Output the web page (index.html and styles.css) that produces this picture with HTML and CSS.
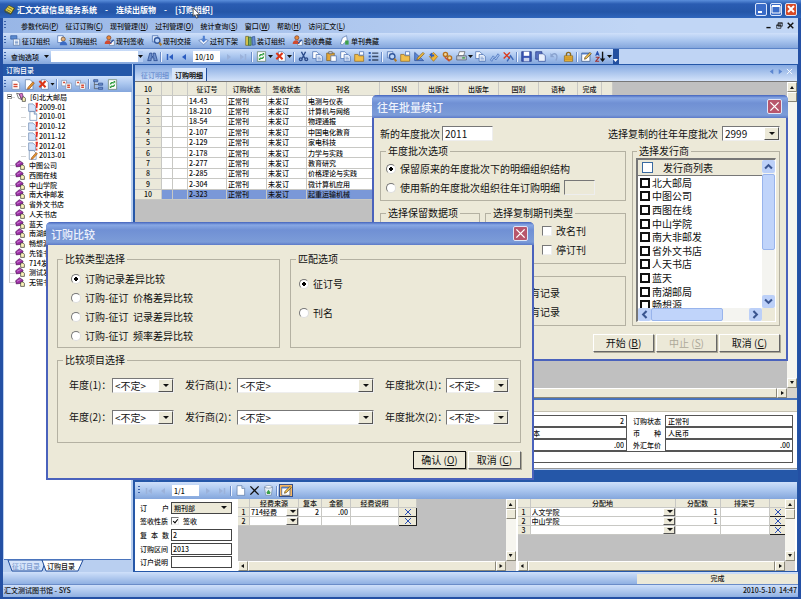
FILE: index.html
```html
<!DOCTYPE html>
<html>
<head>
    <meta charset="utf-8">
    <title>汇文文献信息服务系统</title>
    <link rel="stylesheet" href="styles.css">
</head>
<body>
    <svg class="defs" width="0" height="0">
        <symbol id="i-book" viewBox="0 0 16 16"><path d="M1 9 7 2l8 4-5 8z" fill="#e8d44c" stroke="#4a4a10"/><path d="M1 9l1 3 8 3 5-8-1-2M4 8l6 3M6 5l6 3" fill="none" stroke="#4a4a10"/></symbol>
        <symbol id="i-page" viewBox="0 0 16 16"><path d="M3 1h7l4 4v10H3z" fill="#fff" stroke="#5c7ba8"/><path d="M10 1v4h4" fill="#c6d8f2" stroke="#5c7ba8"/></symbol>
        <symbol id="i-pages" viewBox="0 0 16 16"><path d="M1 1h6l3 3v7H1z" fill="#fff" stroke="#3f66ac"/><path d="M6 5h6l3 3v7H6z" fill="#e8f0fc" stroke="#3f66ac"/><path d="M8 9h4M8 11h5M8 13h5" stroke="#6f90c8"/></symbol>
        <symbol id="i-org" viewBox="0 0 16 16"><path d="M1 1h9v5H1z" fill="#5b8ad0" stroke="#2d579f"/><path d="M5 6h9v9H5z" fill="#fff" stroke="#5c7ba8"/><path d="M7 9h5M7 11h5M7 13h5" stroke="#4a74b8"/></symbol>
        <symbol id="i-man" viewBox="0 0 16 16"><path d="M1 1h8v10H1z" fill="#fff" stroke="#3f66ac"/><circle cx="9" cy="6" r="3" fill="#e6b27a" stroke="#5a4630"/><path d="M4 15c0-8 10-8 11 0z" fill="#3c6cc4"/></symbol>
        <symbol id="i-manred" viewBox="0 0 16 16"><path d="M8 8h7v7H8z" fill="#fff" stroke="#5c7ba8"/><circle cx="7" cy="4" r="3" fill="#e88a3a" stroke="#7a3a20"/><path d="M1 13c0-7 9-7 10 0z" fill="#d04a30"/><path d="m9 12 5-5" stroke="#3055a0" stroke-width="2"/></symbol>
        <symbol id="i-search" viewBox="0 0 16 16"><path d="M2 1h8v9H2z" fill="#dfeafb" stroke="#3f66ac"/><circle cx="9" cy="8" r="4" fill="#bcd6fa" stroke="#33589c" stroke-width="2"/><path d="m12 11 3 4" stroke="#b07a28" stroke-width="3"/></symbol>
        <symbol id="i-shelf" viewBox="0 0 16 16"><path d="m1 8 7-3 7 3-7 6z" fill="#eef4fd" stroke="#5272ac"/><path d="M7 1h3v5h3L8 11 4 6h3z" fill="#4d7ed0"/></symbol>
        <symbol id="i-books" viewBox="0 0 16 16"><path d="M1 2h4v13H1z" fill="#e0cc50" stroke="#6b6020"/><path d="M5 3h4v12H5z" fill="#76ad62" stroke="#35602a"/><path d="m10 3 4-1 1 12-4 1z" fill="#668fd4" stroke="#2f4f8f"/></symbol>
        <symbol id="i-single" viewBox="0 0 16 16"><path d="m2 13 3-9 6-3 1 7-7 6z" fill="#fff" stroke="#4f6fa8"/><path d="M9 8h5v6H9z" fill="#3fa04a"/></symbol>
        <symbol id="i-bino" viewBox="0 0 16 16"><path d="m1 14 3-11h3v5h2V3h3l3 11h-5v-4H6v4z" fill="#6e90cc" stroke="#1d3f86"/></symbol>
        <symbol id="i-first" viewBox="0 0 16 16"><path d="M3 2v12" stroke="currentColor" stroke-width="3"/><path d="M14 2v12L6 8z" fill="currentColor"/></symbol>
        <symbol id="i-prev" viewBox="0 0 16 16"><path d="M12 2v12L4 8z" fill="currentColor"/></symbol>
        <symbol id="i-next" viewBox="0 0 16 16"><path d="M4 2v12l8-6z" fill="currentColor"/></symbol>
        <symbol id="i-last" viewBox="0 0 16 16"><path d="M13 2v12" stroke="currentColor" stroke-width="3"/><path d="M2 2v12l8-6z" fill="currentColor"/></symbol>
        <symbol id="i-refresh" viewBox="0 0 16 16"><path d="M2 1h12v14H2z" fill="#fff" stroke="#5d7a5d"/><path d="M5 8a3 3 0 0 1 5-2M11 8a3 3 0 0 1-5 2" fill="none" stroke="#2b9a3a" stroke-width="2"/><path d="M9 3h3v4zM7 13H4V9z" fill="#2b9a3a"/></symbol>
        <symbol id="i-bin" viewBox="0 0 16 16"><path d="M2 3h12l-2 12H4z" fill="#e8eef6" stroke="#7088a8"/><path d="M2 3c3-3 9-3 12 0-3 2-9 2-12 0z" fill="#fff" stroke="#7088a8"/><path d="M5 11l3-4 3 4-1 2H6z" fill="#3aa048"/></symbol>
        <symbol id="i-del" viewBox="0 0 16 16"><path d="M5 1h6l4 4v10H5z" fill="#fff" stroke="#5c7ba8"/><path d="m2 3 9 9M11 3l-9 9" stroke="#dc3618" stroke-width="3"/></symbol>
        <symbol id="i-cut" viewBox="0 0 16 16"><path d="m5 1 5 10M11 1 6 11" stroke="#2a4a8a" stroke-width="2"/><circle cx="4" cy="12" r="2" fill="none" stroke="#2a4a8a" stroke-width="2"/><circle cx="12" cy="12" r="2" fill="none" stroke="#2a4a8a" stroke-width="2"/></symbol>
        <symbol id="i-paste" viewBox="0 0 16 16"><path d="M1 3h11v11H1z" fill="#e3a637" stroke="#7c5a1c"/><path d="M4 1h5v3H4z" fill="#d5dbe8" stroke="#555"/><path d="M7 7h8v8H7z" fill="#fff" stroke="#3f66ac"/></symbol>
        <symbol id="i-folder" viewBox="0 0 16 16"><path d="M1 5h5l1 2h7v8H1z" fill="#f0be4a" stroke="#94691c"/><path d="M8 1h6v5H8z" fill="#fff" stroke="#3f66ac"/></symbol>
        <symbol id="i-list" viewBox="0 0 16 16"><path d="M1 3h3M1 8h3M1 13h3" stroke="#2f5fb4" stroke-width="3"/><path d="M6 3h9M6 8h9M6 13h9" stroke="#3a4a66" stroke-width="2"/></symbol>
        <symbol id="i-ruler" viewBox="0 0 16 16"><path d="M1 2v12h13z" fill="#5c88d8" stroke="#2a4c94"/><path d="m5 10 8-8 2 2-8 8-3 1z" fill="#f0b83c" stroke="#805c18"/></symbol>
        <symbol id="i-tag" viewBox="0 0 16 16"><path d="m8 2 6 6-6 7-6-7z" fill="#f3b52f" stroke="#a06a10"/><path d="m2 5 4-3v3h3v3H6v3z" fill="#2d5cc0"/></symbol>
        <symbol id="i-gear" viewBox="0 0 16 16"><circle cx="5" cy="5" r="3" fill="#f2d9a0" stroke="#b5701c" stroke-width="2"/><circle cx="11" cy="10" r="3" fill="#f2d9a0" stroke="#b5701c" stroke-width="2"/><path d="m4 9 7 6" stroke="#c64a30" stroke-width="2"/></symbol>
        <symbol id="i-print" viewBox="0 0 16 16"><path d="M5 1h8l-2 6H3z" fill="#fff" stroke="#555"/><path d="M1 7h14v6H1z" fill="#c3c9d4" stroke="#4d5668"/><path d="M9 9h4v2H9z" fill="#3ca044"/></symbol>
        <symbol id="i-link" viewBox="0 0 16 16"><path d="m2 13 4-6 3 3 4-6 2 2-5 7-3-3-3 5z" fill="#a8c4ee" stroke="#3d68b8"/></symbol>
        <symbol id="i-unlink" viewBox="0 0 16 16"><path d="m6 15 5-8 4 6" fill="none" stroke="#3d68b8" stroke-width="2"/><path d="m1 2 9 9M10 2l-9 9" stroke="#dc3618" stroke-width="2"/></symbol>
        <symbol id="i-save" viewBox="0 0 16 16"><path d="M1 1h14v14H1z" fill="#3a55b4" stroke="#1f3580"/><path d="M4 1h8v6H4z" fill="#fff"/><path d="M4 10h8v5H4z" fill="#c9d3ee"/></symbol>
        <symbol id="i-saveall" viewBox="0 0 16 16"><path d="M1 1h9v11H1z" fill="#5a72c4" stroke="#1f3580"/><path d="M5 4h7l3 3v8H5z" fill="#e8effc" stroke="#2d4796"/></symbol>
        <symbol id="i-undo" viewBox="0 0 16 16"><path d="M4 6c5-5 10 0 6 8" fill="none" stroke="#8aa3cf" stroke-width="2"/><path d="M2 3v6h6z" fill="#8aa3cf"/></symbol>
        <symbol id="i-lock" viewBox="0 0 16 16"><path d="M5 8V5a3 3 0 0 1 6 0v3" fill="none" stroke="#8a6a20" stroke-width="2"/><path d="M2 7h12v8H2z" fill="#f0b838" stroke="#8a6418"/><path d="M3 10h10M3 12h10" stroke="#b37e1c"/></symbol>
        <symbol id="i-edit" viewBox="0 0 16 16"><path d="M1 3h12v12H1z" fill="#fff" stroke="#33507f"/><path d="M1 3h12v2H1z" fill="#4a76c0"/><path d="m5 12 1-3 7-7 2 2-7 7z" fill="#f0c050" stroke="#5c4418"/></symbol>
        <symbol id="i-sort" viewBox="0 0 16 16"><path d="m1 7 2.500-6L6 7M2 5h3" fill="none" stroke="#2850b0" stroke-width="1.500"/><path d="M1 9h5l-5 6h5" fill="none" stroke="#a03030" stroke-width="1.500"/><path d="M11 1v12" stroke="#111" stroke-width="2"/><path d="M7 11h8l-4 5z" fill="#111"/></symbol>
        <symbol id="i-newred" viewBox="0 0 16 16"><path d="M3 2h7l4 4v9H3z" fill="#fff" stroke="#7c8fae"/><path d="M5 8h6M5 11h6" stroke="#d64a34" stroke-width="2"/></symbol>
        <symbol id="i-docpen" viewBox="0 0 16 16"><path d="M2 1h7l4 4v10H2z" fill="#fff" stroke="#5c7ba8"/><path d="m6 12 7-8 2 2-7 8-3 1z" fill="#e59a2f" stroke="#9a4a18"/></symbol>
        <symbol id="i-copyred" viewBox="0 0 16 16"><path d="M1 2h7v8H1z" fill="#fff" stroke="#7c8fae"/><path d="M7 6h8v9H7z" fill="#fff" stroke="#7c8fae"/><path d="M3 5h3M9 9h4M9 12h4" stroke="#d64a34" stroke-width="2"/></symbol>
        <symbol id="i-tree" viewBox="0 0 16 16"><path d="M2 1v13h6M2 8h6" fill="none" stroke="#555"/><path d="M1 1h6v3H1zM8 6h6v3H8zM8 12h6v3H8z" fill="#6a8fd0" stroke="#2b4a8a"/></symbol>
        <symbol id="i-docmark" viewBox="0 0 16 16"><path d="M1 3h7l4 4v8H1z" fill="#d4e2f8" stroke="#5c7ba8"/><path d="M12 1h4l-1 9h-2zM13 12h2v3h-2z" fill="#e02a20"/></symbol>
        <symbol id="i-vendor" viewBox="0 0 16 16"><path d="M1 6 7 1l6 4-2 5-9 1z" fill="#9b2fa4" stroke="#4a1450"/><path d="M3 7l6-3" stroke="#e6a8ea"/><path d="M9 8h4l2 2v5H9z" fill="#fbf3b8" stroke="#222"/></symbol>
        <symbol id="i-open" viewBox="0 0 16 16"><path d="M1 2l4 1 4 9-5-2z" fill="#fff" stroke="#333"/><path d="m5 3 5-1 2 7-3 3z" fill="#d878c8" stroke="#4a1450"/><path d="M10 8h3l2 2v5h-5z" fill="#fbf3b8" stroke="#222"/></symbol>
        <symbol id="i-x" viewBox="0 0 16 16"><path d="m2 2 12 12M14 2 2 14" stroke="currentColor" stroke-width="2"/></symbol>
        <symbol id="i-down" viewBox="0 0 16 16"><path d="m3 5 5 5 5-5" fill="none" stroke="currentColor" stroke-width="3"/></symbol>
    </svg>

    <div class="app">
        <header class="titlebar">
            <svg class="icon"><use href="#i-book"/></svg>
            <h1>汇文文献信息服务系统<span>-</span>连续出版物<span>-</span>[订购组织]</h1>
            <svg class="cursor" viewBox="0 0 10 14"><path d="M1 1v10l2-2 2 4 2-1-2-3h4z" fill="#fff" stroke="#333"/></svg>
            <div class="win-buttons">
                <button class="win"><svg viewBox="0 0 10 10"><path d="M2 8h4" stroke="#fff" stroke-width="2"/></svg></button>
                <button class="win"><svg viewBox="0 0 10 10"><path d="M1 2h8v7H1z" fill="none" stroke="#fff"/><path d="M1 2h8" stroke="#fff" stroke-width="2"/></svg></button>
                <button class="win close"><svg viewBox="0 0 10 10"><path d="m2 2 6 6M8 2 2 8" stroke="#fff" stroke-width="2"/></svg></button>
            </div>
        </header>

        <nav class="menubar">
            <span class="grip"></span>
            <a href="#">参数代码(<u>P</u>)</a>
            <a href="#">征订订购(<u>C</u>)</a>
            <a href="#">现刊管理(<u>N</u>)</a>
            <a href="#">过刊管理(<u>O</u>)</a>
            <a href="#">统计查询(<u>S</u>)</a>
            <a href="#">窗口(<u>W</u>)</a>
            <a href="#">帮助(<u>H</u>)</a>
            <a href="#">访问汇文(<u>L</u>)</a>
            <div class="mdi">
                <svg viewBox="0 0 10 10"><path d="M2 8h6" stroke="#111" stroke-width="2"/></svg>
                <svg viewBox="0 0 10 10"><path d="M3 1h6v5H3zM1 4h6v5H1z" fill="none" stroke="#111" stroke-width="1"/><path d="M3 2h6M1 5h6" stroke="#111"/></svg>
                <svg viewBox="0 0 10 10"><path d="m1 1 8 8M9 1 1 9" stroke="#111" stroke-width="2"/></svg>
            </div>
        </nav>

        <div class="bar modules">
            <span class="grip"></span>
            <button><svg class="icon"><use href="#i-org"/></svg>征订组织</button>
            <button><svg class="icon"><use href="#i-man"/></svg>订购组织</button>
            <button><svg class="icon"><use href="#i-manred"/></svg>现刊签收</button>
            <button><svg class="icon"><use href="#i-search"/></svg>现刊交接</button>
            <button><svg class="icon"><use href="#i-shelf"/></svg>过刊下架</button>
            <button><svg class="icon"><use href="#i-books"/></svg>装订组织</button>
            <button><svg class="icon"><use href="#i-manred"/></svg>验收典藏</button>
            <button><svg class="icon"><use href="#i-single"/></svg>单刊典藏</button>
        </div>

        <div class="tools-row">
            <div class="bar tools">
                <span class="grip"></span>
                <button class="query">查询选项<i class="tri"></i></button>
                <span class="search"><input type="text" aria-label="查询"><i class="tri"></i></span>
                <button class="tool"><svg class="icon"><use href="#i-bino"/></svg></button>
                <i class="sep"></i>
                <button class="tool nav"><svg class="icon"><use href="#i-first"/></svg></button>
                <button class="tool nav"><svg class="icon"><use href="#i-prev"/></svg></button>
                <input class="pager" type="text" value="10/10" aria-label="记录">
                <button class="tool nav off"><svg class="icon"><use href="#i-next"/></svg></button>
                <button class="tool nav off"><svg class="icon"><use href="#i-last"/></svg></button>
                <i class="sep"></i>
                <button class="tool"><svg class="icon"><use href="#i-refresh"/></svg></button><i class="tri"></i>
                <button class="tool"><svg class="icon"><use href="#i-del"/></svg></button><i class="tri"></i>
                <i class="sep"></i>
                <button class="tool"><svg class="icon"><use href="#i-cut"/></svg></button>
                <button class="tool"><svg class="icon"><use href="#i-pages"/></svg></button>
                <button class="tool"><svg class="icon"><use href="#i-paste"/></svg></button>
                <button class="tool"><svg class="icon"><use href="#i-pages"/></svg></button>
                <button class="tool"><svg class="icon"><use href="#i-folder"/></svg></button>
                <button class="tool"><svg class="icon"><use href="#i-list"/></svg></button>
                <i class="sep"></i>
                <button class="tool"><svg class="icon"><use href="#i-search"/></svg></button>
                <button class="tool"><svg class="icon"><use href="#i-folder"/></svg></button>
                <button class="tool"><svg class="icon"><use href="#i-ruler"/></svg></button>
                <button class="tool"><svg class="icon"><use href="#i-tag"/></svg></button>
                <button class="tool"><svg class="icon"><use href="#i-gear"/></svg></button>
                <button class="tool"><svg class="icon"><use href="#i-print"/></svg></button><i class="tri"></i>
                <button class="tool"><svg class="icon"><use href="#i-pages"/></svg></button>
                <button class="tool"><svg class="icon"><use href="#i-link"/></svg></button>
                <button class="tool"><svg class="icon"><use href="#i-unlink"/></svg></button>
                <i class="sep"></i>
                <button class="tool"><svg class="icon"><use href="#i-save"/></svg></button>
                <button class="tool"><svg class="icon"><use href="#i-saveall"/></svg></button>
                <button class="tool"><svg class="icon"><use href="#i-undo"/></svg></button>
                <button class="tool"><svg class="icon"><use href="#i-lock"/></svg></button>
                <i class="sep"></i>
                <button class="tool"><svg class="icon"><use href="#i-edit"/></svg></button>
                <button class="tool"><svg class="icon"><use href="#i-sort"/></svg></button><i class="tri"></i>
                <span class="overflow"><i class="tri"></i></span>
            </div>
        </div>

        <div class="workspace">
            <aside class="sidebar">
                <h2>订购目录</h2>
                <div class="bar side-tools">
                    <span class="grip"></span>
                    <button class="tool"><svg class="icon"><use href="#i-newred"/></svg></button>
                    <button class="tool"><svg class="icon"><use href="#i-docpen"/></svg></button>
                    <button class="tool"><svg class="icon"><use href="#i-del"/></svg></button><i class="tri"></i>
                    <i class="sep"></i>
                    <button class="tool"><svg class="icon"><use href="#i-copyred"/></svg></button>
                    <button class="tool"><svg class="icon"><use href="#i-copyred"/></svg></button>
                    <i class="sep"></i>
                    <button class="tool"><svg class="icon"><use href="#i-tree"/></svg></button>
                    <button class="tool"><svg class="icon"><use href="#i-refresh"/></svg></button>
                </div>
                <div class="tree-box">
                    <ul class="tree">
                        <li class="root"><i class="minus"></i><svg class="icon"><use href="#i-open"/></svg>[6]北大邮局</li>
                        <li class="child"><svg class="icon"><use href="#i-docmark"/></svg>2009-01</li>
                        <li class="child"><svg class="icon"><use href="#i-page"/></svg>2010-01</li>
                        <li class="child"><svg class="icon"><use href="#i-docmark"/></svg>2010-12</li>
                        <li class="child"><svg class="icon"><use href="#i-docmark"/></svg>2011-12</li>
                        <li class="child"><svg class="icon"><use href="#i-docmark"/></svg>2012-01</li>
                        <li class="child"><svg class="icon"><use href="#i-docpen"/></svg>2013-01</li>
                        <li><svg class="icon"><use href="#i-vendor"/></svg>中图公司</li>
                        <li><svg class="icon"><use href="#i-vendor"/></svg>西图在线</li>
                        <li><svg class="icon"><use href="#i-vendor"/></svg>中山学院</li>
                        <li><svg class="icon"><use href="#i-vendor"/></svg>南大非邮发</li>
                        <li><svg class="icon"><use href="#i-vendor"/></svg>省外文书店</li>
                        <li><svg class="icon"><use href="#i-vendor"/></svg>人天书店</li>
                        <li><svg class="icon"><use href="#i-vendor"/></svg>蓝天</li>
                        <li><svg class="icon"><use href="#i-vendor"/></svg>南湖邮局</li>
                        <li><svg class="icon"><use href="#i-vendor"/></svg>畅想源</li>
                        <li><svg class="icon"><use href="#i-vendor"/></svg>先锋书店</li>
                        <li><svg class="icon"><use href="#i-vendor"/></svg>714发行</li>
                        <li><svg class="icon"><use href="#i-vendor"/></svg>测试发行</li>
                        <li><svg class="icon"><use href="#i-vendor"/></svg>无锡书店</li>
                    </ul>
                </div>
                <div class="side-tabs">
                    <svg viewBox="0 0 84 12"><path d="M5 0l4 11h30l4-11z" fill="#d6e4fa" stroke="#1e4c9c"/><path d="M39 0l4 11h32l5-11z" fill="#fff" stroke="#1e4c9c"/></svg>
                    <button>征订目录</button>
                    <button class="active">订购目录</button>
                </div>
            </aside>

            <main class="main">
                <div class="tabs">
                    <button>征订明细</button>
                    <button class="active">订购明细</button>
                    <div class="tab-nav">
                        <svg class="icon"><use href="#i-prev"/></svg>
                        <svg class="icon"><use href="#i-next"/></svg>
                        <svg class="icon x"><use href="#i-x"/></svg>
                    </div>
                </div>

                <div class="pane">
                    <div class="pane-body">
                        <table class="grid orders">
                            <colgroup><col class="w27"><col class="w11"><col class="w15"><col class="w39"><col class="w40"><col class="w40"><col class="w73"><col class="w39"><col class="w40"><col class="w40"><col class="w40"><col class="w39"><col class="w24"><col class="w11"></colgroup>
                            <thead>
                                <tr><th>10</th><th></th><th></th><th>征订号</th><th>订购状态</th><th>签收状态</th><th>刊名</th><th>ISSN</th><th>出版社</th><th>出版年</th><th>国别</th><th>语种</th><th>完成</th><th></th></tr>
                            </thead>
                            <tbody>
                                <tr><th>1</th><td></td><td></td><td>14-43</td><td>正常刊</td><td>未发订</td><td>电测与仪表</td><td></td><td></td><td></td><td></td><td></td><td></td><td></td></tr>
                                <tr><th>2</th><td></td><td></td><td>18-210</td><td>正常刊</td><td>未发订</td><td>计算机与网络</td><td></td><td></td><td></td><td></td><td></td><td></td><td></td></tr>
                                <tr><th>3</th><td></td><td></td><td>18-54</td><td>正常刊</td><td>未发订</td><td>物理通报</td><td></td><td></td><td></td><td></td><td></td><td></td><td></td></tr>
                                <tr><th>4</th><td></td><td></td><td>2-107</td><td>正常刊</td><td>未发订</td><td>中国电化教育</td><td></td><td></td><td></td><td></td><td></td><td></td><td></td></tr>
                                <tr><th>5</th><td></td><td></td><td>2-129</td><td>正常刊</td><td>未发订</td><td>家电科技</td><td></td><td></td><td></td><td></td><td></td><td></td><td></td></tr>
                                <tr><th>6</th><td></td><td></td><td>2-178</td><td>正常刊</td><td>未发订</td><td>力学与实践</td><td></td><td></td><td></td><td></td><td></td><td></td><td></td></tr>
                                <tr><th>7</th><td></td><td></td><td>2-277</td><td>正常刊</td><td>未发订</td><td>教育研究</td><td></td><td></td><td></td><td></td><td></td><td></td><td></td></tr>
                                <tr><th>8</th><td></td><td></td><td>2-285</td><td>正常刊</td><td>未发订</td><td>价格理论与实践</td><td></td><td></td><td></td><td></td><td></td><td></td><td></td></tr>
                                <tr><th>9</th><td></td><td></td><td>2-304</td><td>正常刊</td><td>未发订</td><td>微计算机应用</td><td></td><td></td><td></td><td></td><td></td><td></td><td></td></tr>
                                <tr class="selected"><th>10</th><td></td><td></td><td>2-323</td><td>正常刊</td><td>未发订</td><td>起重运输机械</td><td></td><td></td><td></td><td></td><td></td><td></td><td></td></tr>
                            </tbody>
                        </table>
                    </div>
                    <div class="vbar"><i class="up"></i><b></b><i class="down"></i></div>
                    <div class="hbar"><i class="left"></i><b></b><i class="right"></i></div>
                </div>

                <div class="divider"></div>

                <form class="detail">
                    <label for="year">年度</label><input id="year" type="text" value="2013">
                    <label for="copies">复本数</label><input id="copies" class="num" type="text" value="2">
                    <label for="state">订购状态</label><input id="state" type="text" value="正常刊">
                    <label for="batch">批次</label><input id="batch" type="text" value="01">
                    <label for="edition">版本</label><input id="edition" type="text" value="印刷版本">
                    <label for="currency" class="spread"><span>币</span><span>种</span></label><input id="currency" type="text" value="人民币">
                    <label for="unit">单价</label><input id="unit" type="text">
                    <label for="price">年价</label><input id="price" class="num" type="text" value=".00">
                    <label for="foreign">外汇年价</label><input id="foreign" class="num" type="text" value=".00">
                    <label for="note">备注</label><input id="note" class="wide" type="text">
                </form>

                <h2 class="section-title">订户信息</h2>
                <div class="bar sub-tools">
                    <span class="grip"></span>
                    <button class="tool nav off"><svg class="icon"><use href="#i-first"/></svg></button>
                    <button class="tool nav off"><svg class="icon"><use href="#i-prev"/></svg></button>
                    <input class="pager" type="text" value="1/1" aria-label="订户">
                    <button class="tool nav off"><svg class="icon"><use href="#i-next"/></svg></button>
                    <button class="tool nav off"><svg class="icon"><use href="#i-last"/></svg></button>
                    <i class="sep"></i>
                    <button class="tool"><svg class="icon"><use href="#i-page"/></svg></button>
                    <button class="tool"><svg class="icon"><use href="#i-x"/></svg></button>
                    <button class="tool"><svg class="icon"><use href="#i-bin"/></svg></button>
                    <i class="sep"></i>
                    <button class="tool pressed"><svg class="icon"><use href="#i-edit"/></svg></button>
                </div>

                <div class="bottom">
                    <form class="subscriber">
                        <label for="holder" class="spread"><span>订</span><span>户</span></label>
                        <span class="combo beige"><select id="holder"><option>期刊部</option></select></span>
                        <label for="sign">签收性质</label>
                        <span class="sign"><input id="sign" type="checkbox" checked><label for="sign">签收</label></span>
                        <label for="count" class="spread"><span>复</span><span>本</span><span>数</span></label><input id="count" type="text" value="2">
                        <label for="range">订购区间</label><input id="range" type="text" value="2013">
                        <label for="memo">订户说明</label><input id="memo" type="text">
                    </form>
                    <div class="pane small">
                        <div class="pane-body">
                            <table class="grid funds">
                                <colgroup><col class="w12"><col class="w49"><col class="w23"><col class="w29"><col class="w48"><col class="w18"></colgroup>
                                <thead><tr><th></th><th>经费来源</th><th>复本</th><th>金额</th><th>经费说明</th><th></th></tr></thead>
                                <tbody>
                                    <tr><th>1</th><td><span class="combo cell"><select aria-label="经费来源"><option>714经费</option></select></span></td><td class="num">2</td><td class="num">.00</td><td></td><td class="rm"><button><svg><use href="#i-x"/></svg></button></td></tr>
                                    <tr><th>2</th><td><span class="combo cell"><select aria-label="经费来源"><option></option></select></span></td><td></td><td></td><td></td><td class="rm"><button><svg><use href="#i-x"/></svg></button></td></tr>
                                </tbody>
                            </table>
                        </div>
                        <div class="vbar"><i class="up"></i><b></b><i class="down"></i></div>
                        <div class="hbar"><i class="left"></i><b></b><i class="right"></i></div>
                    </div>
                    <div class="pane small">
                        <div class="pane-body">
                            <table class="grid places">
                                <colgroup><col class="w13"><col class="w145"><col class="w45"><col class="w49"><col class="w18"></colgroup>
                                <thead><tr><th></th><th>分配地</th><th>分配数</th><th>排架号</th><th></th></tr></thead>
                                <tbody>
                                    <tr><th>1</th><td><span class="combo cell"><select aria-label="分配地"><option>人文学院</option></select></span></td><td class="num">1</td><td></td><td class="rm"><button><svg><use href="#i-x"/></svg></button></td></tr>
                                    <tr><th>2</th><td><span class="combo cell"><select aria-label="分配地"><option>中山学院</option></select></span></td><td class="num">1</td><td></td><td class="rm"><button><svg><use href="#i-x"/></svg></button></td></tr>
                                    <tr><th>3</th><td><span class="combo cell"><select aria-label="分配地"><option></option></select></span></td><td></td><td></td><td class="rm"><button><svg><use href="#i-x"/></svg></button></td></tr>
                                </tbody>
                            </table>
                        </div>
                        <div class="vbar"><i class="up"></i><b></b><i class="down"></i></div>
                        <div class="hbar"><i class="left"></i><b></b><i class="right"></i></div>
                    </div>
                </div>
            </main>
        </div>

        <div class="progress"><span>完成</span></div>
        <footer class="status"><span>汇文测试图书馆 - SYS</span><span>2010-5-10&nbsp; 14:47</span></footer>
    </div>

    <section class="dialog renew">
        <header><h2>往年批量续订</h2><button class="close"><svg><use href="#i-x"/></svg></button></header>
        <form>
            <div class="top">
                <label for="newBatch">新的年度批次</label><input id="newBatch" type="text" value="2011">
                <label for="oldBatch" class="push">选择复制的往年年度批次</label>
                <span class="combo"><select id="oldBatch"><option>2999</option></select></span>
            </div>
            <div class="cols">
                <div class="stack">
                    <fieldset class="mode">
                        <legend>年度批次选项</legend>
                        <label><input type="radio" name="mode" checked>保留原来的年度批次下的明细组织结构</label>
                        <label><input type="radio" name="mode">使用新的年度批次组织往年订购明细<input type="text" class="short" disabled aria-label="批次"></label>
                    </fieldset>
                    <div class="pair">
                        <fieldset><legend>选择保留数据项</legend></fieldset>
                        <fieldset class="kinds">
                            <legend>选择复制期刊类型</legend>
                            <label><input type="checkbox">改名刊</label>
                            <label><input type="checkbox">停订刊</label>
                        </fieldset>
                    </div>
                    <fieldset class="existing">
                        <label><input type="radio" name="exist">删除新的年度批次已存在的所有记录</label>
                        <label><input type="radio" name="exist">保留新的年度批次已存在的所有记录</label>
                    </fieldset>
                </div>
                <fieldset class="vendors">
                    <legend>选择发行商</legend>
                    <div class="listbox">
                        <div class="list">
                            <label class="all"><input type="checkbox">发行商列表</label>
                            <div class="items">
                                <label><input type="checkbox">北大邮局</label>
                                <label><input type="checkbox">中图公司</label>
                                <label><input type="checkbox">西图在线</label>
                                <label><input type="checkbox">中山学院</label>
                                <label><input type="checkbox">南大非邮发</label>
                                <label><input type="checkbox">省外文书店</label>
                                <label><input type="checkbox">人天书店</label>
                                <label><input type="checkbox">蓝天</label>
                                <label><input type="checkbox">南湖邮局</label>
                                <label><input type="checkbox">畅想源</label>
                            </div>
                        </div>
                        <div class="xp-v"><svg class="turn"><use href="#i-down"/></svg><b></b><svg><use href="#i-down"/></svg></div>
                        <div class="xp-h"><svg class="lt"><use href="#i-down"/></svg><b></b><svg class="rt"><use href="#i-down"/></svg></div>
                    </div>
                </fieldset>
            </div>
            <div class="actions">
                <button type="button">开始 (<u>B</u>)</button>
                <button type="button" disabled>中止 (<u>S</u>)</button>
                <button type="button">取消 (<u>C</u>)</button>
            </div>
        </form>
    </section>

    <section class="dialog compare">
        <header><h2>订购比较</h2><button class="close"><svg><use href="#i-x"/></svg></button></header>
        <form>
            <div class="cols">
                <fieldset class="types">
                    <legend>比较类型选择</legend>
                    <label><input type="radio" name="type" checked>订购记录差异比较</label>
                    <label><input type="radio" name="type">订购-征订&nbsp; 价格差异比较</label>
                    <label><input type="radio" name="type">订购-征订&nbsp; 记录差异比较</label>
                    <label><input type="radio" name="type">订购-征订&nbsp; 频率差异比较</label>
                </fieldset>
                <fieldset class="match">
                    <legend>匹配选项</legend>
                    <label><input type="radio" name="match" checked>征订号</label>
                    <label><input type="radio" name="match">刊名</label>
                </fieldset>
            </div>
            <fieldset class="targets">
                <legend>比较项目选择</legend>
                <div class="fields">
                    <label for="y1">年度(1)：</label><span class="combo"><select id="y1"><option>&lt;不定&gt;</option></select></span>
                    <label for="v1" class="gap">发行商(1)：</label><span class="combo"><select id="v1"><option>&lt;不定&gt;</option></select></span>
                    <label for="b1" class="gap">年度批次(1)：</label><span class="combo"><select id="b1"><option>&lt;不定&gt;</option></select></span>
                    <label for="y2">年度(2)：</label><span class="combo"><select id="y2"><option>&lt;不定&gt;</option></select></span>
                    <label for="v2" class="gap">发行商(2)：</label><span class="combo"><select id="v2"><option>&lt;不定&gt;</option></select></span>
                    <label for="b2" class="gap">年度批次(2)：</label><span class="combo"><select id="b2"><option>&lt;不定&gt;</option></select></span>
                </div>
            </fieldset>
            <div class="actions">
                <button type="button" class="default">确认 (<u>O</u>)</button>
                <button type="button">取消 (<u>C</u>)</button>
            </div>
        </form>
    </section>
</body>
</html>
```
FILE: styles.css
```css
* {
    box-sizing: border-box;
}
body {
    margin: 0;
    height: 100vh;
    position: relative;
    overflow: hidden;
    font-family: "Noto Sans CJK SC", sans-serif;
    font-size: 7px;
    font-weight: 500;
    line-height: 10px;
    color: #111;
}
h1, h2, ul, form, fieldset {
    margin: 0;
    padding: 0;
}
button, input, select {
    font: inherit;
    color: inherit;
    margin: 0;
    padding: 0;
    border: 0;
    border-radius: 0;
    background: none;
    min-width: 0;
}
select {
    appearance: none;
}
a {
    color: inherit;
    text-decoration: none;
}
.defs {
    position: absolute;
}
.icon {
    width: 11px;
    height: 11px;
    flex: none;
}
.app {
    height: 100%;
    display: flex;
    flex-direction: column;
    border: solid #2450a4;
    border-width: 0 3px 2px;
    background: #b9cff0;
}

/* title and menus */
.titlebar {
    height: 18px;
    flex: none;
    margin: 0 -3px;
    padding: 1px 4px 0;
    display: flex;
    align-items: center;
    gap: 2px;
    position: relative;
    background: linear-gradient(#5b8fdc, #2a5cb2 4px, #2456a8 12px, #2f66bd);
}
.titlebar h1 {
    font-size: 8px;
    line-height: 12px;
    color: #fff;
    flex: 1;
}
.titlebar h1 span {
    padding: 0 8px;
}
.cursor {
    position: absolute;
    left: 192px;
    top: 7px;
    width: 9px;
    height: 12px;
}
.win-buttons {
    display: flex;
    gap: 3px;
}
.win {
    width: 12px;
    height: 13px;
    border: 1px solid #dbe6fa;
    border-radius: 2px;
    background: #3a6cc8;
    display: flex;
}
.win.close {
    background: #d84a26;
}
.win svg {
    width: 10px;
    height: 10px;
}
.menubar {
    height: 15px;
    flex: none;
    display: flex;
    align-items: center;
    background: linear-gradient(90deg, #98b6e6, #c1d6f5 80%);
}
.menubar a {
    margin-right: 7px;
}
.menubar .grip {
    margin-right: 15px;
}
.mdi {
    margin-left: auto;
    display: flex;
    gap: 4px;
    padding-right: 4px;
}
.mdi svg {
    width: 7px;
    height: 7px;
}
.grip {
    width: 2px;
    height: 9px;
    margin: 0 2px 0 1px;
    flex: none;
    background: repeating-linear-gradient(#3a62ac 0 1px, transparent 1px 3px);
}
.bar {
    display: flex;
    align-items: center;
    flex: none;
    background: linear-gradient(#cfe0fa, #a9c5ee 50%, #84a6dc);
}
.modules {
    height: 16px;
    border-bottom: 1px solid #5b84c8;
}
.modules .grip {
    margin-right: 4px;
}
.modules button {
    width: 47px;
    flex: none;
    display: flex;
    align-items: center;
    gap: 1px;
}
.tools-row {
    flex: none;
    display: flex;
    background: #bfd4f4;
}
.tools {
    height: 15px;
}
.tools .grip {
    margin-right: 5px;
}
.tri {
    width: 5px;
    height: 3px;
    flex: none;
    background: #111;
    clip-path: polygon(0 0, 100% 0, 50% 100%);
}
.query {
    width: 40px;
    display: flex;
    align-items: center;
    gap: 5px;
}
.search {
    width: 92px;
    height: 11px;
    flex: none;
    display: flex;
    align-items: center;
    background: linear-gradient(90deg, #fff 87px, #b5cdf2 87px);
}
.search input {
    width: 87px;
}
.search + .tool {
    margin-left: 2px;
}
.tool {
    width: 14px;
    height: 13px;
    flex: none;
    display: flex;
    align-items: center;
    justify-content: center;
}
.tool.nav {
    color: #2a5cc0;
}
.tool.nav .icon {
    width: 8px;
    height: 8px;
}
.tool.off {
    color: #9bb2da;
}
.sep {
    width: 4px;
    height: 10px;
    flex: none;
    background: linear-gradient(90deg, transparent 1px, #6a8cc8 1px 2px, #eef4ff 2px 3px, transparent 3px);
}
.pager {
    width: 27px;
    height: 11px;
    margin: 0 2px;
    padding: 0 2px;
    background: #fff;
}
.overflow {
    width: 6px;
    align-self: stretch;
    margin-left: 1px;
    background: #2450a0;
    display: flex;
    align-items: flex-end;
    padding-bottom: 2px;
}
.overflow .tri {
    background: #fff;
}

/* work area */
.workspace {
    flex: 1;
    min-height: 0;
    display: flex;
    gap: 1px;
}
.sidebar {
    width: 129px;
    display: flex;
    flex-direction: column;
}
.sidebar h2, .section-title {
    height: 12px;
    flex: none;
    padding-left: 3px;
    font-size: 7px;
    font-weight: 500;
    line-height: 12px;
    color: #fff;
    background: #2557a8;
}
.side-tools {
    height: 16px;
}
.tree-box {
    flex: 1;
    margin: 0 1px;
    background: #fff;
    border-bottom: 1px solid #4a74bc;
}
.tree {
    list-style: none;
    height: 195px;
    display: grid;
    grid-auto-rows: minmax(0, 1fr);
    background: linear-gradient(#c9c9c9, #c9c9c9) 5px 8px / 1px 183px no-repeat;
}
.tree li {
    display: flex;
    align-items: center;
    gap: 4px;
    padding-left: 11px;
    white-space: nowrap;
    background: linear-gradient(#d4d4d4, #d4d4d4) 6px 5px / 5px 1px no-repeat;
}
.tree li.root {
    padding-left: 3px;
}
.tree li.child {
    padding-left: 24px;
    gap: 1px;
    background-position: 17px 5px;
}
.tree .icon {
    width: 10px;
    height: 10px;
}
.minus {
    width: 5px;
    height: 5px;
    border: 1px solid #999;
    background: linear-gradient(#222, #222) 0 1px / 3px 1px no-repeat #fff;
}
.side-tabs {
    height: 12px;
    position: relative;
    display: flex;
    gap: 7px;
    padding-left: 9px;
}
.side-tabs svg {
    position: absolute;
    left: 0;
    top: 0;
    width: 84px;
    height: 12px;
}
.side-tabs button {
    position: relative;
    color: #7d9cd0;
}
.side-tabs button.active {
    color: #111;
}
.main {
    flex: 1;
    min-width: 0;
    display: flex;
    flex-direction: column;
    border: 1px solid #2557a8;
    border-width: 1px 1px 1px 2px;
}
.tabs {
    height: 16px;
    flex: none;
    padding: 3px 4px 0 5px;
    display: flex;
    align-items: flex-end;
    background: linear-gradient(#86aae2, #d3e2f9);
}
.tabs button {
    height: 13px;
    padding: 0 3px 0 1px;
    color: #6a8fd0;
}
.tabs button.active {
    padding: 0 3px;
    font-weight: 700;
    color: #111;
    background: #d7e5fa;
    border-right: 1px solid #1e4c9c;
}
.tab-nav {
    margin-left: auto;
    height: 13px;
    display: flex;
    gap: 2px;
    color: #5c86d0;
}
.tab-nav .icon {
    width: 7px;
    height: 7px;
}
.tab-nav .x {
    color: #fff;
}
.pane {
    flex: 1;
    min-height: 0;
    display: grid;
    grid-template: minmax(0, 1fr) 10px / minmax(0, 1fr) 10px;
    background: #d8d4cc;
    border-top: 1px solid #777;
}
.pane-body {
    background: #c0c0c0;
    overflow: hidden;
}
.grid {
    table-layout: fixed;
    border-collapse: separate;
    border-spacing: 0;
    line-height: 8px;
}
.grid th, .grid td {
    padding: 0 1px;
    border: solid #c8c8c4;
    border-width: 0 1px 1px 0;
    background: #fff;
    text-align: left;
    white-space: nowrap;
    overflow: hidden;
}
.grid th {
    font-weight: 500;
    text-align: center;
    background: #ebe9da;
}
.grid .selected td {
    background: #7a98d8;
}
.grid .num {
    text-align: right;
}
.orders {
    width: 478px;
    height: 118px;
}
.orders thead tr {
    height: 14px;
}
.w11 { width: 11px; }
.w12 { width: 12px; }
.w13 { width: 13px; }
.w15 { width: 15px; }
.w18 { width: 18px; }
.w23 { width: 23px; }
.w24 { width: 24px; }
.w27 { width: 27px; }
.w29 { width: 29px; }
.w39 { width: 39px; }
.w40 { width: 40px; }
.w45 { width: 45px; }
.w48 { width: 48px; }
.w49 { width: 49px; }
.w73 { width: 73px; }
.w145 { width: 145px; }
.vbar, .hbar {
    display: flex;
    background: #f6f5ef;
}
.vbar {
    flex-direction: column;
}
.vbar i, .hbar i {
    width: 10px;
    height: 10px;
    flex: none;
    border: 1px solid;
    border-color: #fff #8a8778 #8a8778 #fff;
    background: #ece9d8;
    display: flex;
    align-items: center;
    justify-content: center;
}
.vbar i::before, .hbar i::before {
    content: "";
    width: 4px;
    height: 4px;
    background: #111;
}
.up::before { clip-path: polygon(50% 25%, 100% 100%, 0 100%); }
.down::before { clip-path: polygon(0 0, 100% 0, 50% 75%); }
.left::before { clip-path: polygon(0 50%, 75% 0, 75% 100%); }
.right::before { clip-path: polygon(25% 0, 100% 50%, 25% 100%); }
.vbar b {
    height: 10px;
    margin-bottom: auto;
    background: #ece9d8;
    border: 1px solid;
    border-color: #fff #8a8778 #8a8778 #fff;
}
.hbar b {
    flex: 1;
    background: #ece9d8;
    border: 1px solid;
    border-color: #fff #8a8778 #8a8778 #fff;
}
.divider {
    height: 14px;
    flex: none;
    background: #ece9d8;
    border-top: 2px solid #4a74bc;
    border-bottom: 1px solid #c4c0b0;
}
.detail {
    flex: none;
    padding: 3px 4px 5px;
    display: grid;
    grid-template-columns: 30px 1fr 30px 118px 30px 128px;
    column-gap: 4px;
    row-gap: 0;
    background: #fff;
    border-bottom: 1px solid #999;
}
.detail label {
    padding-left: 2px;
    line-height: 12px;
    white-space: nowrap;
}
.detail input {
    height: 12px;
    width: 100%;
    padding: 0 2px;
    border: 1px solid #555;
}
.detail .num {
    text-align: right;
}
.detail .wide {
    grid-column: span 5;
}
.spread {
    display: flex;
    justify-content: space-between;
}
.section-title {
    margin-top: 1px;
}
.sub-tools {
    height: 17px;
}
.sub-tools .grip {
    margin: 0 2px 0 3px;
}
.pressed {
    background: #f7b863;
    border: 1px solid #34508c;
}
.bottom {
    height: 72px;
    flex: none;
    display: grid;
    grid-template-columns: 103px minmax(0, 1fr) minmax(0, 1fr);
    background: #fff;
}
.subscriber {
    padding: 2px 5px 2px 5px;
    display: grid;
    grid-template-columns: 29px 61px;
    grid-auto-rows: 1fr;
    column-gap: 2px;
    align-items: center;
}
.subscriber input[type="text"] {
    height: 12px;
    width: 61px;
    padding: 0 1px;
    border: 1px solid #444;
}
.sign {
    display: flex;
    gap: 4px;
}
.small {
    border-top: 0;
    border-right: 2px solid #fff;
}
.funds {
    width: 179px;
}
.places {
    width: 270px;
}
.small tr {
    height: 9px;
}
.small .grid td {
    padding: 0 0 0 1px;
}
.small .grid td.num {
    padding-right: 2px;
}
.small .grid td.rm {
    padding: 0;
    background: #ece9d8;
    border-color: #222;
}
.rm button {
    width: 100%;
    height: 8px;
    display: flex;
    justify-content: center;
    color: #2a50b8;
}
.rm svg {
    width: 10px;
    height: 8px;
}

/* drop-downs */
.combo {
    position: relative;
    display: block;
    height: 15px;
    border: 1px solid;
    border-color: #777 #eee #eee #777;
    background: #fff;
}
.combo select {
    width: 100%;
    height: 13px;
    padding-left: 2px;
    line-height: 13px;
    display: block;
}
.combo::after {
    content: "";
    position: absolute;
    right: 0;
    top: 0;
    bottom: 0;
    width: 13px;
    border: 1px solid;
    border-color: #fff #555 #555 #fff;
    background: #ece9d8;
    pointer-events: none;
}
.combo::before {
    content: "";
    position: absolute;
    z-index: 1;
    right: 4px;
    top: 5px;
    border: 3px solid transparent;
    border-top-color: #111;
    border-bottom: 0;
    pointer-events: none;
}
.combo.beige {
    height: 12px;
    background: #ece9d8;
    border-color: #444;
}
.combo.beige select {
    height: 10px;
    line-height: 10px;
}
.combo.beige::after {
    border: 0;
}
.combo.beige::before {
    top: 3px;
}
.combo.cell {
    height: 8px;
    border: 0;
}
.combo.cell select {
    height: 8px;
    line-height: 8px;
    padding: 0;
}
.combo.cell::after {
    width: 10px;
}
.combo.cell::before {
    right: 2px;
    top: 2px;
}

/* radios and ticks */
input[type="radio"] {
    appearance: none;
    width: 10px;
    height: 10px;
    flex: none;
    border: 1px solid;
    border-color: #777 #ddd #ddd #777;
    border-radius: 5px;
    background: #fff;
}
input[type="radio"]:checked {
    background: radial-gradient(circle, #000 2px, #fff 2px);
}
input[type="checkbox"] {
    appearance: none;
    width: 10px;
    height: 10px;
    flex: none;
    border: 1px solid;
    border-color: #777 #eee #eee #777;
    background: #fff;
}
.sign input[type="checkbox"] {
    width: 8px;
    height: 8px;
    align-self: center;
    position: relative;
}
.sign input::after {
    content: "";
    position: absolute;
    left: 2px;
    top: 0;
    width: 2px;
    height: 4px;
    border: solid #000;
    border-width: 0 1px 1px 0;
    transform: rotate(40deg);
}

/* bottom strips */
.progress {
    height: 13px;
    flex: none;
    display: flex;
    justify-content: flex-end;
    background: linear-gradient(#cfe0fa, #8fb0e2);
    border-bottom: 1px solid #6a8cc8;
}
.progress span {
    width: 161px;
    margin-top: 2px;
    line-height: 9px;
    text-align: center;
    background: #ece9d8;
}
.status {
    height: 12px;
    flex: none;
    padding: 0 1px;
    display: flex;
    justify-content: space-between;
    background: linear-gradient(#cfe0fa, #8fb0e2);
}

/* dialogs */
.dialog {
    position: absolute;
    font-size: 10px;
    font-weight: 400;
    line-height: 14px;
    background: #ece9d8;
    border: 2px solid #4a62bc;
    border-top: 0;
    border-radius: 5px 5px 0 0;
}
.dialog header {
    height: 23px;
    margin: 0 -2px;
    padding: 0 6px 0 5px;
    display: flex;
    align-items: center;
    justify-content: space-between;
    border-radius: 5px 5px 0 0;
    background: linear-gradient(#4464bc, #88a8e4 3px, #7090d4 8px, #7c9cd8 20px, #5c7ac8);
}
.dialog h2 {
    font-size: 11px;
    font-weight: 500;
    color: #eef2fc;
}
.dialog .close {
    width: 15px;
    height: 15px;
    display: flex;
    align-items: center;
    justify-content: center;
    border: 1px solid #dfe6f8;
    border-radius: 2px;
    background: #b8566c;
    color: #fff;
}
.dialog .close svg {
    width: 11px;
    height: 11px;
}
.dialog fieldset {
    min-width: 0;
    border: 1px solid #b4b1a2;
}
.dialog legend {
    margin-left: 5px;
    padding: 0 2px;
    line-height: 14px;
    white-space: nowrap;
}
.dialog fieldset label {
    display: flex;
    align-items: center;
    gap: 4px;
    white-space: nowrap;
}
.actions {
    display: flex;
    justify-content: flex-end;
    gap: 2px;
}
.actions button {
    height: 18px;
    border: 1px solid;
    border-color: #fff #666 #666 #fff;
    box-shadow: 1px 1px 0 #aaa797;
}
.actions button:disabled {
    color: #aca899;
}
.renew {
    left: 372px;
    top: 95px;
    width: 416px;
}
.renew form {
    padding: 8px 6px 7px;
}
.top {
    display: flex;
    align-items: center;
    height: 15px;
    margin-bottom: 3px;
}
.top label {
    width: 62px;
    white-space: nowrap;
}
.top label.push {
    width: auto;
    margin-left: auto;
    padding-right: 4px;
}
.top input, .short {
    width: 51px;
    height: 15px;
    padding: 0 2px;
    border: 1px solid;
    border-color: #777 #eee #eee #777;
    background: #fff;
}
.top .combo {
    width: 58px;
}
.renew .cols {
    display: grid;
    grid-template-columns: 246px 1fr;
    gap: 6px;
    margin-bottom: 8px;
}
.stack label {
    height: 19px;
    padding-left: 5px;
}
.mode {
    height: 57px;
    padding-top: 1px;
}
.mode .short {
    width: 31px;
    background: #ece9d8;
}
.pair {
    display: grid;
    grid-template-columns: 100px 1fr;
    gap: 5px;
    height: 58px;
    margin: 5px 0 12px;
}
.kinds {
    padding-top: 1px;
}
.kinds label {
    padding-left: 56px;
}
.existing {
    height: 50px;
    padding-top: 6px;
}
.vendors legend {
    margin-left: 4px;
}
.listbox {
    height: 164px;
    margin: 0 3px;
    display: grid;
    grid-template: minmax(0, 1fr) 13px / minmax(0, 1fr) 13px;
    border: 1px solid;
    border-width: 2px 1px 1px 2px;
    border-color: #777 #fff #fff #777;
    background: #ece9d8;
}
.list {
    overflow: hidden;
    background: #fff;
}
.dialog .list .all {
    height: 16px;
    gap: 10px;
    padding-left: 4px;
    border-bottom: 1px solid #777;
    background: #ece9d8;
}
.list .all input {
    width: 11px;
    height: 11px;
    border: 1px solid #3a6aa0;
}
.list .items {
    height: 136px;
    display: grid;
    grid-auto-rows: minmax(0, 1fr);
}
.dialog .items label {
    gap: 2px;
    padding-left: 2px;
}
.items input[type="checkbox"] {
    border: 2px solid #111;
}
.xp-v, .xp-h {
    display: flex;
    background: #f4f4f0;
}
.xp-v {
    flex-direction: column;
}
.xp-v svg, .xp-h svg {
    width: 13px;
    height: 13px;
    padding: 1px;
    color: #3a5590;
    background: #bcd0f8;
    border-radius: 2px;
}
.xp-v .turn { transform: rotate(180deg); }
.xp-h .lt { transform: rotate(90deg); }
.xp-h .rt { transform: rotate(-90deg); margin-left: auto; }
.xp-v b {
    height: 76px;
    margin: 1px 0 auto;
    border: 1px solid #98b4ec;
    border-radius: 2px;
    background: #c0d4fa;
}
.xp-h b {
    width: 72px;
    border: 1px solid #98b4ec;
    border-radius: 2px;
    background: #c0d4fa;
}
.renew .actions button {
    width: 61px;
}
.compare {
    left: 46px;
    top: 222px;
    width: 488px;
}
.compare form {
    padding: 7px 11px 9px 9px;
}
.compare .cols {
    display: grid;
    grid-template-columns: 223px 1fr;
    gap: 10px;
    height: 96px;
    margin-bottom: 5px;
}
.types, .match {
    padding-top: 3px;
}
.types label {
    height: 19px;
    padding-left: 13px;
}
.match label {
    height: 29px;
    padding-left: 8px;
}
.targets {
    height: 90px;
    padding-top: 2px;
    margin-bottom: 8px;
}
.fields {
    margin-left: 11px;
    display: grid;
    grid-template-columns: 43px 62px 63px 137px 72px 63px;
    grid-auto-rows: 32px;
    align-items: center;
}
.fields .gap {
    padding-left: 11px;
}
.compare .actions button {
    width: 53px;
}
.compare .actions .default {
    border: 1px solid #111;
}
```
